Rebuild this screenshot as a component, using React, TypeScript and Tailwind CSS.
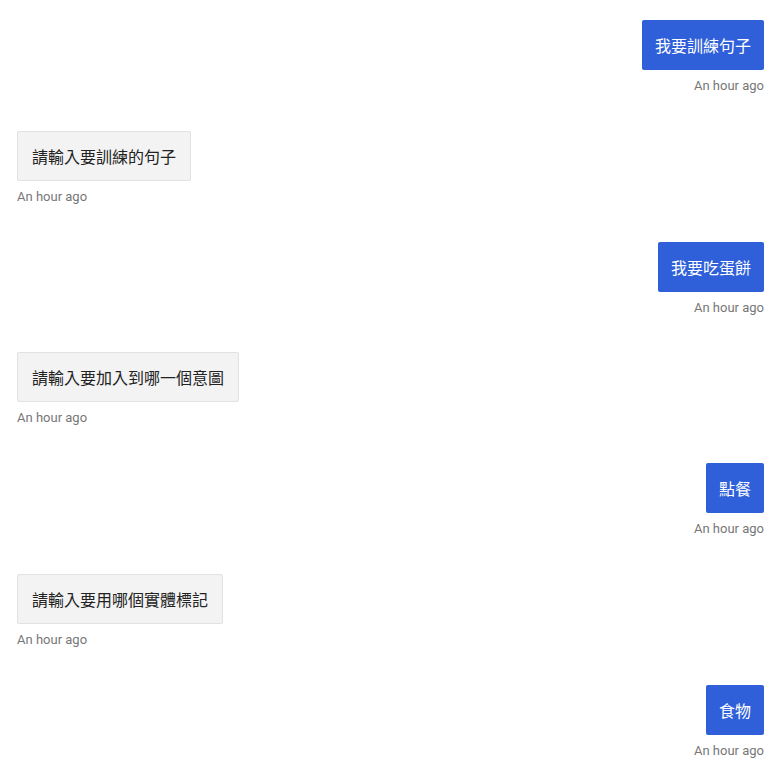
import { FC } from 'react';

type Msg = { me: boolean; text: string };

const messages: Msg[] = [
  { me: true, text: '我要訓練句子' },
  { me: false, text: '請輸入要訓練的句子' },
  { me: true, text: '我要吃蛋餅' },
  { me: false, text: '請輸入要加入到哪一個意圖' },
  { me: true, text: '點餐' },
  { me: false, text: '請輸入要用哪個實體標記' },
  { me: true, text: '食物' },
];

const App: FC = () => {
  return (
    <div className="w-full min-h-screen bg-white pt-5 pl-[17px] pr-[19px] font-['Roboto','Noto_Sans_CJK_TC',sans-serif]">
      <div className="flex flex-col gap-[37.8px]">
        {messages.map((m, i) => (
          <div key={i} className={m.me ? 'flex flex-col items-end' : 'flex flex-col items-start'}>
            <div
              className={
                m.me
                  ? "rounded-[2px] bg-[#2f5fd9] px-[13px] py-[13px] text-[16px] leading-[24px] text-white font-['Noto_Sans_CJK_TC',sans-serif]"
                  : "rounded-[2px] border border-[#e2e2e2] bg-[#f3f3f3] px-[14px] py-[12px] text-[16px] leading-[24px] text-[#222] font-['Noto_Sans_CJK_TC',sans-serif]"
              }
            >
              {m.text}
            </div>
            <div className="mt-[8px] text-[13px] leading-[15px] text-[#777]">An hour ago</div>
          </div>
        ))}
      </div>
    </div>
  );
};

export default App;
